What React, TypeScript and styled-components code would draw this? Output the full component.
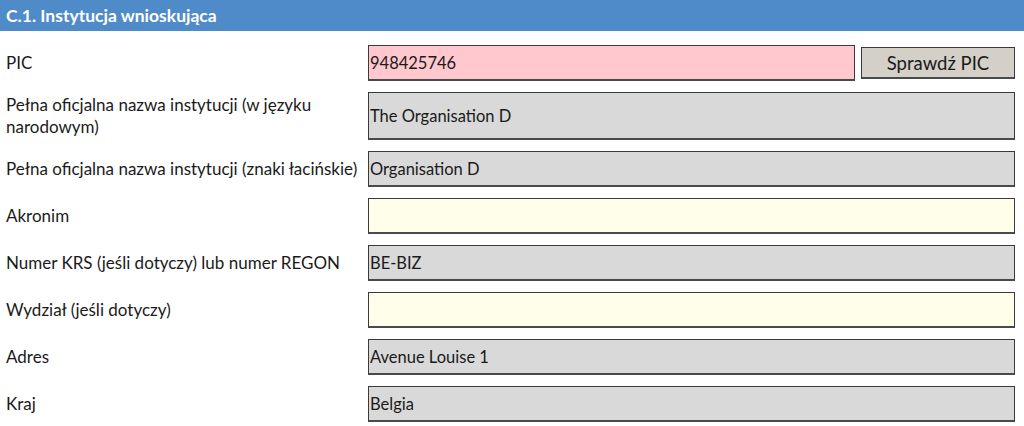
import styled, { createGlobalStyle } from 'styled-components'

const GlobalStyle = createGlobalStyle`
  body {
    margin: 0;
    background: #ffffff;
    font-family: Lato, 'Liberation Sans', sans-serif;
    color: #1a1a1a;
  }
`

const Section = styled.div`
  width: 1024px;
`

const Header = styled.div`
  height: 31px;
  display: flex;
  align-items: center;
  padding-left: 6px;
  background-color: #4f8bc8;
  color: #ffffff;
  font-size: 17.5px;
  font-weight: 700;
`

const Rows = styled.div`
  display: flex;
  flex-direction: column;
  gap: 11px;
  padding: 14px 9px 0 6px;
`

const Row = styled.div`
  display: flex;
  align-items: center;
  gap: 6px;
`

const Label = styled.div`
  width: 356px;
  font-size: 17px;
  line-height: 22px;
  flex-shrink: 0;
  white-space: normal;
`

const Field = styled.div<{ $bg: string; $tall?: boolean }>`
  flex: 1;
  height: ${(p) => (p.$tall ? '48px' : '36px')};
  box-sizing: border-box;
  display: flex;
  align-items: center;
  padding-left: 1px;
  background-color: ${(p) => p.$bg};
  border: 1px solid #3a3a3a;
  border-bottom: 2px solid #4a4a4a;
  font-size: 16.5px;
`

const Button = styled.button`
  width: 154px;
  height: 32px;
  box-sizing: border-box;
  background-color: #d4d0c8;
  border: 1px solid #3a3a3a;
  border-bottom: 2px solid #4a4a4a;
  font-family: Lato, 'Liberation Sans', sans-serif;
  font-size: 18.5px;
  color: #1a1a1a;
  padding: 0;
`

const GRAY = '#d9d9d9'
const YELLOW = '#fffeea'
const PINK = '#ffc7ce'

const rows: { label: string; value: string; bg: string; tall?: boolean }[] = [
  { label: 'Pełna oficjalna nazwa instytucji (w języku narodowym)', value: 'The Organisation D', bg: GRAY, tall: true },
  { label: 'Pełna oficjalna nazwa instytucji (znaki łacińskie)', value: 'Organisation D', bg: GRAY },
  { label: 'Akronim', value: '', bg: YELLOW },
  { label: 'Numer KRS (jeśli dotyczy) lub numer REGON', value: 'BE-BIZ', bg: GRAY },
  { label: 'Wydział (jeśli dotyczy)', value: '', bg: YELLOW },
  { label: 'Adres', value: 'Avenue Louise 1', bg: GRAY },
  { label: 'Kraj', value: 'Belgia', bg: GRAY },
]

const App = () => {
  return (
    <Section>
      <GlobalStyle />
      <Header>C.1. Instytucja wnioskująca</Header>
      <Rows>
        <Row>
          <Label>PIC</Label>
          <Field $bg={PINK}>948425746</Field>
          <Button>Sprawdź PIC</Button>
        </Row>
        {rows.map((r, i) => (
          <Row key={i}>
            <Label>{r.label}</Label>
            <Field $bg={r.bg} $tall={r.tall}>
              {r.value}
            </Field>
          </Row>
        ))}
      </Rows>
    </Section>
  )
}

export default App
